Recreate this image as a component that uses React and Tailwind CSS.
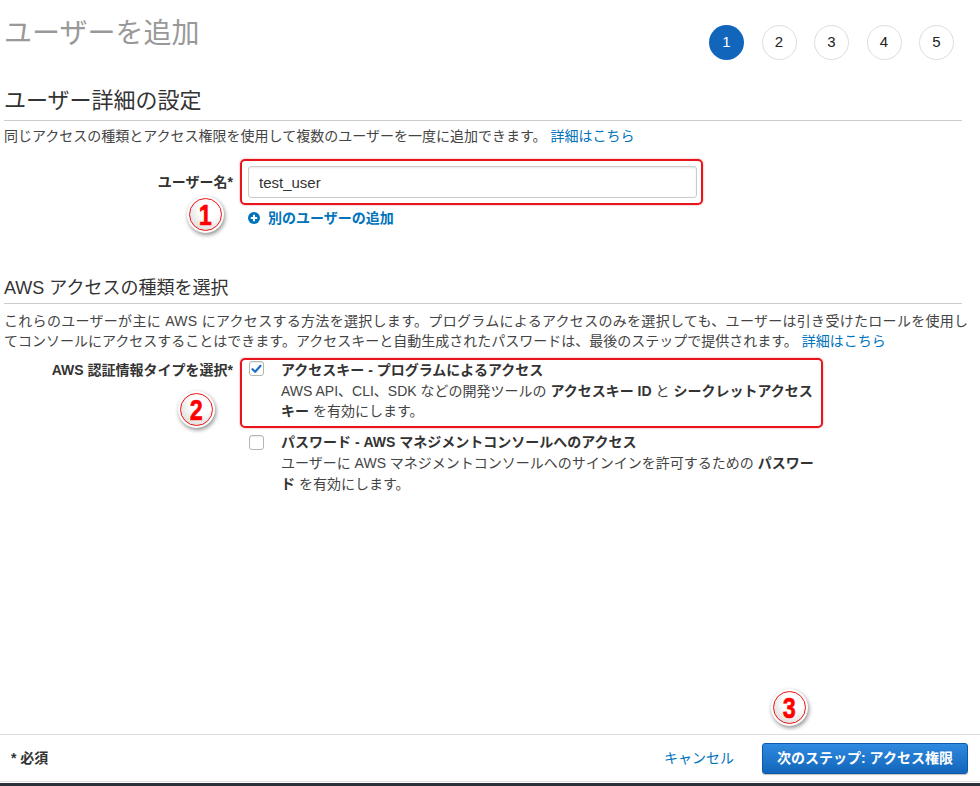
import React from "react";

function Annot({ n, className }) {
  return (
    <div
      className={
        "absolute w-[37px] h-[37px] rounded-full bg-white p-[2px] shadow-[1px_2px_4px_rgba(0,0,0,0.45)] " +
        className
      }
    >
      <div className="w-full h-full rounded-full border-[1.5px] border-[#ee1111] bg-[radial-gradient(circle_at_62%_32%,#ffffff_35%,#cfcfcf_100%)] flex items-center justify-center">
        <span className="text-[30px] leading-none font-bold text-[#ff0000] [-webkit-text-stroke:0.6px_#ff0000] scale-x-[0.78] [text-shadow:0_0_1px_#fff,0_0_2px_#fff] font-['Liberation_Sans',sans-serif]">
          {n}
        </span>
      </div>
    </div>
  );
}

function Step({ n, active }) {
  return active ? (
    <div className="w-[35px] h-[35px] rounded-full bg-[#1166bb] text-white flex items-center justify-center text-[15px]">
      {n}
    </div>
  ) : (
    <div className="w-[35px] h-[35px] rounded-full border border-[#dddddd] bg-white text-[#222] flex items-center justify-center text-[15px]">
      {n}
    </div>
  );
}

function CheckBox({ checked, className }) {
  return (
    <div
      className={
        "shrink-0 w-[15px] h-[15px] rounded-[3px] border border-[#b5b5b5] bg-white shadow-[inset_0_1px_1px_rgba(0,0,0,0.08)] flex items-center justify-center " +
        className
      }
    >
      {checked && (
        <svg width="11" height="10" viewBox="0 0 11 10">
          <path d="M1.5 5.2 L4.2 7.8 L9.5 1.8" fill="none" stroke="#1a6fc4" strokeWidth="2.2" strokeLinecap="round" strokeLinejoin="round" />
        </svg>
      )}
    </div>
  );
}

export default function App() {
  return (
    <div className="relative w-[980px] h-[786px] bg-white flex flex-col overflow-hidden font-['Liberation_Sans','Noto_Sans_CJK_JP',sans-serif] text-[#444]">
      <div className="flex-1 px-[4px]">
        <div className="flex items-start justify-between h-[60px]">
          <h1 className="mt-[17px] text-[28px] leading-[34px] text-[#999999] font-normal">ユーザーを追加</h1>
          <div className="mt-[25px] mr-[22px] flex gap-[17.5px]">
            <Step n="1" active />
            <Step n="2" />
            <Step n="3" />
            <Step n="4" />
            <Step n="5" />
          </div>
        </div>

        <h2 className="mt-[26px] w-[958px] text-[22px] leading-[30px] text-[#333] font-normal pb-[4px] border-b border-[#cccccc]">
          ユーザー詳細の設定
        </h2>
        <p className="mt-[5px] text-[14px] leading-[20px] text-[#444]">
          同じアクセスの種類とアクセス権限を使用して複数のユーザーを一度に追加できます。{" "}
          <span className="text-[#0073bb]">詳細はこちら</span>
        </p>

        <div className="mt-[13px] flex items-center">
          <div className="w-[229px] text-right text-[14px] leading-[20px] font-bold text-[#333]">ユーザー名*</div>
          <div className="ml-[7px] border-2 border-[#e8141c] rounded-[5px] pl-[6px] pr-[4px] py-[5px] shadow-[0_0_2px_rgba(232,20,28,0.5)]">
            <input
              readOnly
              value="test_user"
              className="w-[449px] h-[32px] border border-[#cccccc] rounded-[3px] px-[10px] text-[15px] text-[#333] bg-white shadow-[inset_0_1px_2px_rgba(0,0,0,0.1)] outline-none"
            />
          </div>
        </div>

        <div className="mt-[3px] ml-[244px] flex items-center gap-[8px] text-[14px] leading-[20px] font-bold text-[#0073bb]">
          <svg width="12" height="12" viewBox="0 0 12 12">
            <circle cx="6" cy="6" r="6" fill="#0073bb" />
            <path d="M6 2.8 V9.2 M2.8 6 H9.2" stroke="#fff" strokeWidth="2" />
          </svg>
          <span>別のユーザーの追加</span>
        </div>

        <h2 className="mt-[47px] w-[958px] text-[18px] leading-[26px] text-[#333] font-normal pb-[2px] border-b border-[#cccccc]">
          AWS アクセスの種類を選択
        </h2>
        <p className="mt-[7px] text-[14px] leading-[20px] text-[#444] whitespace-nowrap">
          <span className="tracking-[0.3px]">
            これらのユーザーが主に AWS にアクセスする方法を選択します。プログラムによるアクセスのみを選択しても、ユーザーは引き受けたロールを使用し
          </span>
          <br />
          てコンソールにアクセスすることはできます。アクセスキーと自動生成されたパスワードは、最後のステップで提供されます。{" "}
          <span className="text-[#0073bb]">詳細はこちら</span>
        </p>

        <div className="mt-[7px] flex items-start">
          <div className="w-[229px] pt-[2px] text-right text-[14px] leading-[20px] font-bold text-[#333]">
            AWS 認証情報タイプを選択*
          </div>
          <div className="ml-[7px] flex flex-col">
            <div className="w-[583px] border-2 border-[#e8141c] rounded-[5px] pl-[7px] pb-[5px] flex items-start shadow-[0_0_2px_rgba(232,20,28,0.5)]">
              <CheckBox checked className="mt-[1px]" />
              <div className="ml-[17px] text-[14px] whitespace-nowrap">
                <div className="leading-[21px] font-bold text-[#333]">アクセスキー - プログラムによるアクセス</div>
                <div className="leading-[20px] text-[#444]">
                  AWS API、CLI、SDK などの開発ツールの <b className="text-[#333]">アクセスキー ID</b> と{" "}
                  <b className="text-[#333]">シークレットアクセス</b>
                  <br />
                  <b className="text-[#333]">キー</b> を有効にします。
                </div>
              </div>
            </div>
            <div className="mt-[4px] pl-[9px] flex items-start">
              <CheckBox className="mt-[3px]" />
              <div className="ml-[17px] text-[14px] whitespace-nowrap">
                <div className="leading-[21px] font-bold text-[#333]">パスワード - AWS マネジメントコンソールへのアクセス</div>
                <div className="leading-[21px] text-[#444]">
                  ユーザーに AWS マネジメントコンソールへのサインインを許可するための <b className="text-[#333]">パスワー</b>
                  <br />
                  <b className="text-[#333]">ド</b> を有効にします。
                </div>
              </div>
            </div>
          </div>
        </div>
      </div>

      <div className="box-border h-[48px] border-t border-b border-[#dddddd] flex items-center justify-between pl-[11px] pr-[12px]">
        <div className="text-[14px] font-bold text-[#333]">* 必須</div>
        <div className="flex items-center">
          <span className="mr-[28px] text-[14px] text-[#0073bb]">キャンセル</span>
          <button className="w-[206px] h-[31px] rounded-[3px] border border-[#0e5aa7] bg-gradient-to-b from-[#2f8ae0] to-[#1166bb] text-white text-[14px] font-bold shadow-[0_1px_1px_rgba(0,0,0,0.25)]">
            次のステップ: アクセス権限
          </button>
        </div>
      </div>
      <div className="h-[1px] bg-white" />
      <div className="h-[3px] bg-[#2b3138]" />

      <Annot n="1" className="left-[187px] top-[196px]" />
      <Annot n="2" className="left-[178px] top-[391px]" />
      <Annot n="3" className="left-[771px] top-[689px]" />
    </div>
  );
}
